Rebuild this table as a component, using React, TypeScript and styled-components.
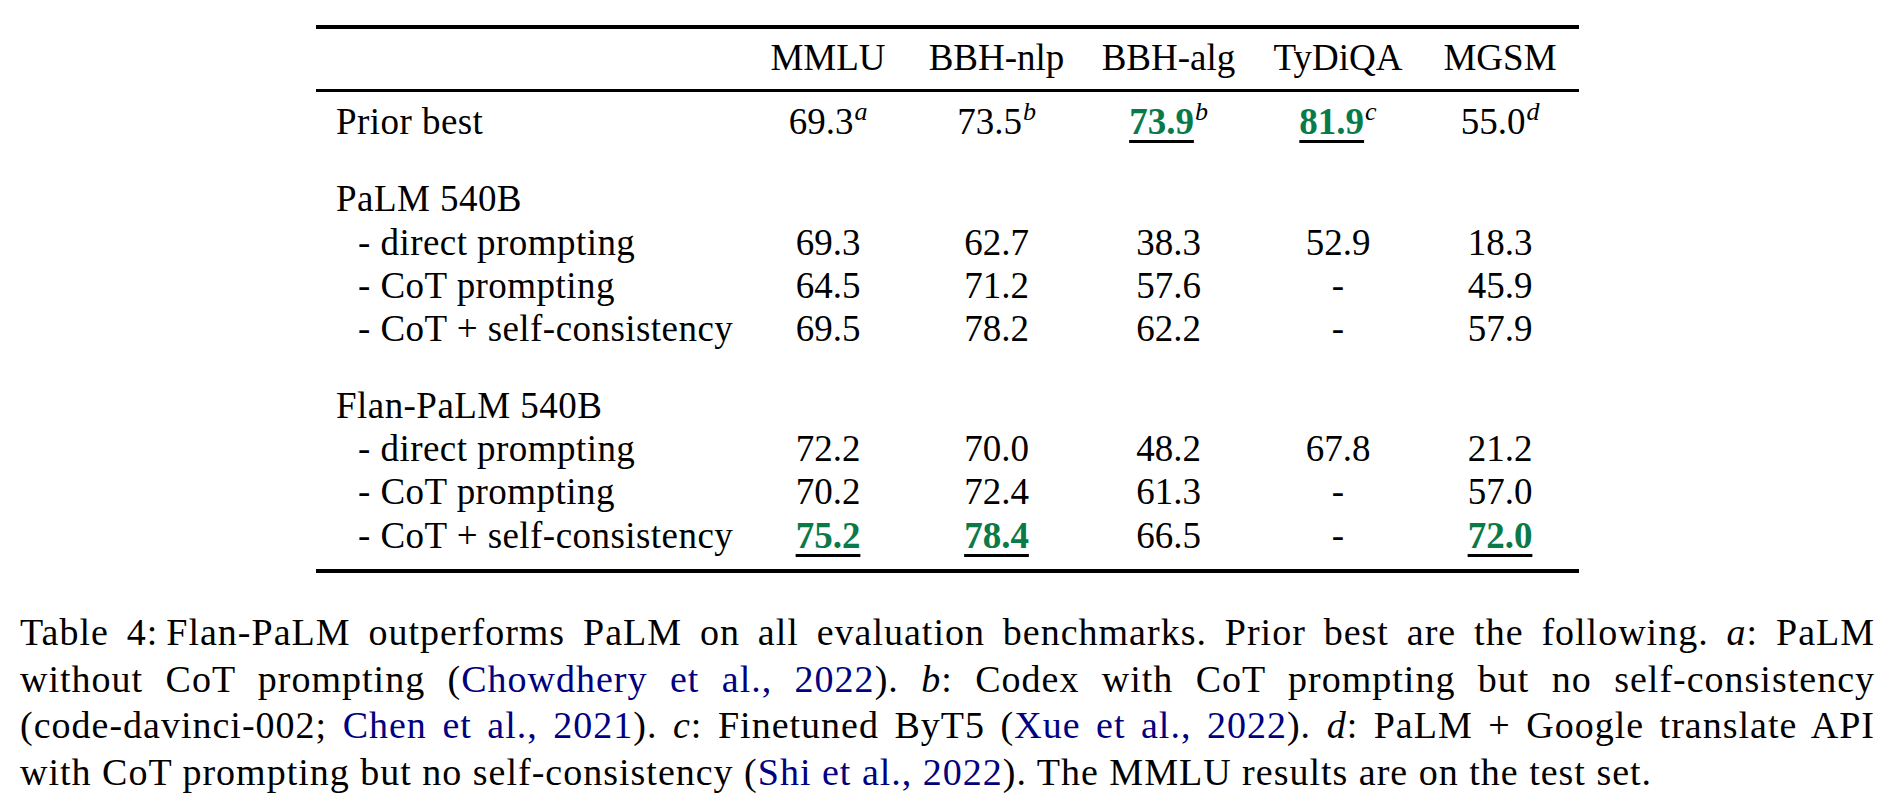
import styled, { createGlobalStyle } from 'styled-components';

const GlobalStyle = createGlobalStyle`
	html, body {
		margin: 0;
		padding: 0;
		background: #ffffff;
	}
	body {
		font-family: "Liberation Serif", "Times New Roman", serif;
		color: #000000;
	}
`;

const Page = styled.div`
	width: 1855px;
	padding: 25px 0 0 20px;
`;

const Table = styled.div`
	width: 1263px;
	margin: 0 auto;
	border-top: 4px solid #000;
	border-bottom: 4px solid #000;
	padding-bottom: 12px;
	font-size: 37px;
`;

const Row = styled.div`
	display: grid;
	grid-template-columns: 429px 166px 171px 173px 166px 158px;
	line-height: 43.3px;
`;

const HeaderRow = styled(Row)`
	padding: 7px 0 10px;
	border-bottom: 3px solid #000;
	margin-bottom: 7.5px;
`;

const Group = styled.div<{ $gap: number }>`
	margin-top: ${p => p.$gap}px;
`;

const Label = styled.div<{ $indent?: boolean }>`
	padding-left: ${p => (p.$indent ? 42 : 20)}px;
	white-space: nowrap;
	letter-spacing: 0.45px;
`;

const Cell = styled.div`
	text-align: center;
	white-space: nowrap;
`;

const Best = styled.span`
	color: #0b7a49;
	font-weight: bold;
	text-decoration: underline;
	text-decoration-color: #000;
	text-decoration-thickness: 2.5px;
	text-underline-offset: 6px;
`;

const Sup = styled.sup`
	font-style: italic;
	font-size: 26px;
	line-height: 0;
	vertical-align: 14px;
	margin-left: 1px;
`;

const Caption = styled.div`
	margin-top: 36px;
	font-size: 38px;
	line-height: 46.67px;
	letter-spacing: 1px;
`;

const Line = styled.div<{ $last?: boolean }>`
	text-align: justify;
	text-align-last: ${p => (p.$last ? 'left' : 'justify')};
`;

const Cite = styled.span`
	color: #000080;
`;

const Var = styled.i`
	font-style: italic;
`;

const CaptionLabel = styled.span`
	margin-right: 8px;
`;

type Value = { v: string; best?: boolean; sup?: string };

const headers = ['MMLU', 'BBH-nlp', 'BBH-alg', 'TyDiQA', 'MGSM'];

const prior: Value[] = [
	{ v: '69.3', sup: 'a' },
	{ v: '73.5', sup: 'b' },
	{ v: '73.9', sup: 'b', best: true },
	{ v: '81.9', sup: 'c', best: true },
	{ v: '55.0', sup: 'd' },
];

const groups: { name: string; rows: { label: string; values: Value[] }[] }[] = [
	{
		name: 'PaLM 540B',
		rows: [
			{ label: '- direct prompting', values: [{ v: '69.3' }, { v: '62.7' }, { v: '38.3' }, { v: '52.9' }, { v: '18.3' }] },
			{ label: '- CoT prompting', values: [{ v: '64.5' }, { v: '71.2' }, { v: '57.6' }, { v: '-' }, { v: '45.9' }] },
			{ label: '- CoT + self-consistency', values: [{ v: '69.5' }, { v: '78.2' }, { v: '62.2' }, { v: '-' }, { v: '57.9' }] },
		],
	},
	{
		name: 'Flan-PaLM 540B',
		rows: [
			{ label: '- direct prompting', values: [{ v: '72.2' }, { v: '70.0' }, { v: '48.2' }, { v: '67.8' }, { v: '21.2' }] },
			{ label: '- CoT prompting', values: [{ v: '70.2' }, { v: '72.4' }, { v: '61.3' }, { v: '-' }, { v: '57.0' }] },
			{
				label: '- CoT + self-consistency',
				values: [{ v: '75.2', best: true }, { v: '78.4', best: true }, { v: '66.5' }, { v: '-' }, { v: '72.0', best: true }],
			},
		],
	},
];

const ValueCell = ({ value }: { value: Value }) => (
	<Cell>
		{value.best ? <Best>{value.v}</Best> : value.v}
		{value.sup && <Sup>{value.sup}</Sup>}
	</Cell>
);

export default function App() {
	return (
		<>
			<GlobalStyle />
			<Page>
				<Table>
					<HeaderRow>
						<Label />
						{headers.map(h => (
							<Cell key={h}>{h}</Cell>
						))}
					</HeaderRow>
					<Row>
						<Label>Prior best</Label>
						{prior.map((p, i) => (
							<ValueCell key={i} value={p} />
						))}
					</Row>
					{groups.map((g, gi) => (
						<Group key={g.name} $gap={gi === 0 ? 34.4 : 33}>
							<Row>
								<Label>{g.name}</Label>
							</Row>
							{g.rows.map(r => (
								<Row key={r.label}>
									<Label $indent>{r.label}</Label>
									{r.values.map((v, i) => (
										<ValueCell key={i} value={v} />
									))}
								</Row>
							))}
						</Group>
					))}
				</Table>
				<Caption>
					<Line>
						<CaptionLabel>Table 4:</CaptionLabel>Flan-PaLM outperforms PaLM on all evaluation benchmarks. Prior best are the following. <Var>a</Var>: PaLM
					</Line>
					<Line>
						without CoT prompting (<Cite>Chowdhery et al., 2022</Cite>). <Var>b</Var>: Codex with CoT prompting but no self-consistency
					</Line>
					<Line>
						(code-davinci-002; <Cite>Chen et al., 2021</Cite>). <Var>c</Var>: Finetuned ByT5 (<Cite>Xue et al., 2022</Cite>). <Var>d</Var>: PaLM + Google translate API
					</Line>
					<Line $last>
						with CoT prompting but no self-consistency (<Cite>Shi et al., 2022</Cite>). The MMLU results are on the test set.
					</Line>
				</Caption>
			</Page>
		</>
	);
}
